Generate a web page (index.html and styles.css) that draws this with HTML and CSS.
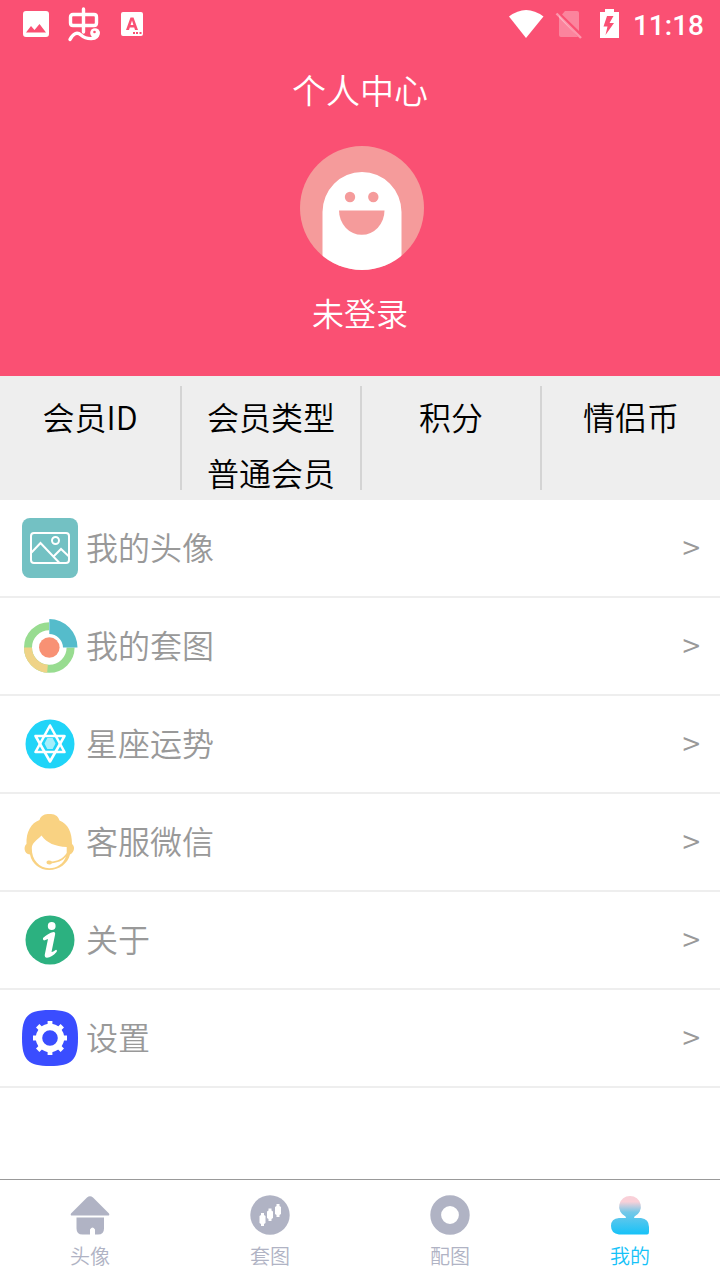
FILE: index.html
```
<!DOCTYPE html>
<html lang="zh-CN">
<head>
<meta charset="UTF-8">
<meta name="viewport" content="width=device-width, initial-scale=1.0">
<title>个人中心</title>
<link rel="stylesheet" href="styles.css">
</head>
<body>

<header class="header">
  <div class="status-bar">
    <svg class="status-left" width="150" height="48" viewBox="0 0 150 48">
      <path fill="#fff" fill-rule="evenodd" d="M26 11h20a3 3 0 0 1 3 3v20a3 3 0 0 1-3 3H26a3 3 0 0 1-3-3V14a3 3 0 0 1 3-3zM26 32.500h20l-6.500-8.500-5 6-3.500-4z"/>
      <g fill="none" stroke="#fff" stroke-width="3.400" stroke-linecap="round" stroke-linejoin="round">
        <path d="M83.500 9v23M73 14.500h21q2.500 0 2.500 2.500v6q0 2.500-2.500 2.500H73q-2.500 0-2.500-2.500v-6q0-2.500 2.500-2.500z"/>
        <path d="M70 39.500c3-6 7-8 11-4.500 5 4.500 17 6 17-2.500"/>
      </g>
      <circle cx="95" cy="33" r="4.800" fill="#fff"/>
      <circle cx="94.500" cy="32" r="1.300" fill="#fa5073"/>
      <path fill="#fff" fill-rule="evenodd" d="M123 12h18a2 2 0 0 1 2 2v20a2 2 0 0 1-2 2h-18a2 2 0 0 1-2-2V14a2 2 0 0 1 2-2zM130.500 17.500L126 30h3l.8-2.500h4.400L135 30h3l-4.500-12.500zM132 20.500l1.400 4.500h-2.800zM133 32v2h2v-2zM136 32v2h2v-2zM139.500 32v2h2v-2z"/>
    </svg>
    <div class="status-right">
      <svg width="114" height="48" viewBox="507 0 114 48">
        <path fill="#fff" d="M509 16.500q17-13 34.500 0L526 38z"/>
        <path fill="#fff" fill-opacity=".3" d="M565 11h12q2 0 2 2v18L562 14.500zM559 15.500l19 21.500h-17q-2 0-2-2z"/>
        <path stroke="#fff" stroke-opacity=".4" stroke-width="2.400" d="M556.500 13.500l24.500 24.500"/>
        <path fill="#fff" fill-rule="evenodd" d="M605 9h9v3h5v26h-19V12h5zM607 16l-3.500 10.500h4l-2 8.500 8.500-12h-4.500l4-7z"/>
      </svg>
      <span class="clock">11:18</span>
    </div>
  </div>
  <h1 class="title">个人中心</h1>
  <svg class="avatar" width="124" height="124" viewBox="0 0 124 124">
    <defs>
      <clipPath id="face"><circle cx="62" cy="62" r="62"/></clipPath>
    </defs>
    <circle cx="62" cy="62" r="62" fill="#f59b9b"/>
    <path clip-path="url(#face)" fill="#fff" d="M22.500 124V66a39.500 40 0 0 1 79 0v58z"/>
    <g fill="#f59b9b">
      <circle cx="50" cy="51" r="5.200"/>
      <circle cx="73.300" cy="51" r="5.200"/>
      <path d="M39 64.500h45.500a22.700 24.300 0 0 1-45.500 0z"/>
    </g>
  </svg>
  <p class="nickname">未登录</p>
</header>

<section class="stats">
  <div class="stat"><span>会员ID</span></div>
  <div class="stat"><span>会员类型</span><span>普通会员</span></div>
  <div class="stat"><span>积分</span></div>
  <div class="stat"><span>情侣币</span></div>
</section>

<main class="menu">
  <a class="menu-item" href="#">
    <svg class="menu-icon" viewBox="0 0 56 60">
      <rect width="56" height="60" rx="8" fill="#73c1c3"/>
      <g fill="none" stroke="#fff" stroke-width="2">
        <rect x="9" y="15" width="38" height="30" rx="3"/>
        <circle cx="33.500" cy="22.500" r="3.500"/>
        <path d="M9.500 34.500l9-9.500L37.500 45M32 38l7-7 8 7.500"/>
      </g>
    </svg>
    <span class="menu-text">我的头像</span>
    <span class="arrow">&gt;</span>
  </a>
  <a class="menu-item" href="#">
    <svg class="menu-icon" viewBox="0 0 56 60">
      <g transform="translate(0 1.500)">
        <g fill="none" stroke-width="8">
          <circle cx="27.300" cy="30" r="21.300" stroke="#98dc90"/>
          <path stroke="#efd387" d="M6 30a21.300 21.300 0 0 0 19.500 21.300"/>
        </g>
        <path fill="#fff" d="M27 0h29v30H27z"/>
        <path fill="#55bccb" d="M27.300 1.500A28.500 28.500 0 0 1 55.500 30H41a14 14 0 0 0-13.700-13.500z"/>
        <circle cx="27.300" cy="30" r="10.300" fill="#f89174"/>
      </g>
    </svg>
    <span class="menu-text">我的套图</span>
    <span class="arrow">&gt;</span>
  </a>
  <a class="menu-item" href="#">
    <svg class="menu-icon" viewBox="0 0 56 60">
      <circle cx="28" cy="30" r="24.500" fill="#20d4f8"/>
      <g fill="none" stroke="#fff" stroke-width="2.600" stroke-linejoin="round">
        <path d="M28 11.500L42.500 38h-29z"/>
        <path d="M28 47.500L13.500 22h29z"/>
      </g>
      <path fill="#a5effc" d="M25.300 24h5.400l2.800 5.500-2.800 5.500h-5.400l-2.800-5.500z"/>
    </svg>
    <span class="menu-text">星座运势</span>
    <span class="arrow">&gt;</span>
  </a>
  <a class="menu-item" href="#">
    <svg class="menu-icon" viewBox="0 0 56 60">
      <path fill="#f9d282" d="M17.500 8C19 3 23 2 27.300 2S36 3 37.500 8.500C46 12 50 20 50 32c3 2 3 8-2 10.500-2 9-11 15.500-20.700 15.500S10 52 8 42.500C1.500 42 1.500 34 4.500 32 4 20 9 11 17.500 8z"/>
      <path fill="#fff" d="M19.500 23.500C14 29 10 31 9.800 36c-.3 12 7.700 20.200 17.500 20.200 7.500 0 14.200-4.400 16.700-11.700-3.500 4.500-9 6.300-14 6.700-1.500 2-5.500 1.500-5.500-.7s3.500-2.500 5.500-1c5-.5 11-2.500 14.700-8.500V35C33 34.500 25 31 19.500 23.500z"/>
    </svg>
    <span class="menu-text">客服微信</span>
    <span class="arrow">&gt;</span>
  </a>
  <a class="menu-item" href="#">
    <svg class="menu-icon" viewBox="0 0 56 60">
      <circle cx="28" cy="30" r="24.500" fill="#2cb180"/>
      <circle cx="29.700" cy="16" r="3.900" fill="#fff"/>
      <path fill="#fff" d="M21 28c3-2.500 7-5.500 10.500-6 1.500 0 2 1 1.500 3l-3.500 17c1.500 0 3-1.500 4.500-2.300 1 0 1.200 1.300.5 2.300-2.500 3-6.500 5.500-9.500 5.800-2 0-2.500-1.500-2.200-3.300L26 29l-4 1.500q-1.500-1-1-2.500z"/>
    </svg>
    <span class="menu-text">关于</span>
    <span class="arrow">&gt;</span>
  </a>
  <a class="menu-item" href="#">
    <svg class="menu-icon" viewBox="0 0 56 60">
      <path fill="#3a4dff" d="M28 2c22 0 28 6 28 28s-6 28-28 28S0 52 0 30 6 2 28 2z"/>
      <g stroke="#fff" fill="none">
        <circle cx="28" cy="30" r="11" stroke-width="6.400"/>
        <path stroke-width="4.800" d="M28 13v5M28 42v5M11 30h5M40 30h5M15.700 17.700l4 4M36.300 38.300l4 4M15.700 42.300l4-4M36.300 21.700l4-4"/>
      </g>
    </svg>
    <span class="menu-text">设置</span>
    <span class="arrow">&gt;</span>
  </a>
</main>

<nav class="tab-bar">
  <a class="tab" href="#">
    <svg width="40" height="40" viewBox="0 0 40 40">
      <path fill="#b0b3c4" d="M17 2.500q3-2.500 6 0l16 16q1 2-1 2H2q-2 0-1-2zM6.500 22.500h27.500v11q0 6-6 6h-3v-5q-2.500-4-5 0v5h-7.500q-6 0-6-6z"/>
    </svg>
    <span>头像</span>
  </a>
  <a class="tab" href="#">
    <svg width="40" height="40" viewBox="0 0 40 40">
      <circle cx="20" cy="20" r="19.700" fill="#b0b3c4"/>
      <path fill="#fff" d="M11 18h3v2l1.500 1v7L14 29v2h-3v-2l-1.500-1v-7L11 20zM18.500 13.500h3v2l1.500 1v6.500l-1.500 1v2h-3v-2l-1.500-1v-6.500l1.500-1zM26.500 9h3v2l1.500 1v7l-1.500 1v2h-3v-2L25 19v-7l1.500-1z"/>
    </svg>
    <span>套图</span>
  </a>
  <a class="tab" href="#">
    <svg width="40" height="40" viewBox="0 0 40 40">
      <circle cx="20" cy="20" r="14.300" fill="none" stroke="#b0b3c4" stroke-width="10.800"/>
    </svg>
    <span>配图</span>
  </a>
  <a class="tab active" href="#">
    <svg width="40" height="40" viewBox="0 0 40 40">
      <defs>
        <linearGradient id="user" x1="0" y1="0" x2="0" y2="1">
          <stop offset="0.150" stop-color="#f9d0d8"/>
          <stop offset="0.420" stop-color="#74c8e8"/>
          <stop offset="1" stop-color="#16c2f8"/>
        </linearGradient>
      </defs>
      <path fill="url(#user)" d="M20 1a10.700 10.700 0 0 1 4.500 20.500l-.5 1.500h7q8 1 8 9v5q0 2.500-2 2.500H9Q1 38.500 1 31t8-8h7l-.5-1.500A10.700 10.700 0 0 1 20 1z"/>
    </svg>
    <span>我的</span>
  </a>
</nav>

</body>
</html>
```
FILE: styles.css
```
* {
  box-sizing: border-box;
}

body {
  margin: 0;
  min-height: 100vh;
  display: flex;
  flex-direction: column;
  background: #fff;
  font-family: "Noto Sans CJK SC", sans-serif;
  font-size: 32px;
  font-weight: 350;
}

a {
  color: inherit;
  text-decoration: none;
}

/* 顶部 */
.header {
  display: flex;
  flex-direction: column;
  align-items: center;
  padding-bottom: 42px;
  background: #fa5073;
  color: #fff;
}

.status-bar {
  display: flex;
  justify-content: space-between;
  width: 100%;
  height: 48px;
}

.status-right {
  display: flex;
  padding-right: 16px;
}

.clock {
  margin-left: 12px;
  font: 500 28px/52px Roboto, sans-serif;
}

.title {
  margin: 20px 0 34px;
  font-size: 34px;
  font-weight: 350;
  line-height: 44px;
}

.avatar {
  display: block;
  margin-left: 3px;
}

.nickname {
  margin: 20px 0 0;
  line-height: 44px;
}

/* 会员信息 */
.stats {
  display: grid;
  grid-template-columns: repeat(4, 1fr);
  padding: 10px 0;
  background: #eee;
  color: #000;
}

.stat {
  display: flex;
  flex-direction: column;
  align-items: center;
  gap: 20px;
  padding-top: 12px;
  border-left: 2px solid #d4d4d4;
  line-height: 36px;
}

.stat:first-child {
  border-left: none;
}

/* 菜单 */
.menu {
  flex: 1;
}

.menu-item {
  display: flex;
  align-items: center;
  height: 98px;
  padding: 0 20px 0 22px;
  border-bottom: 2px solid #eee;
  color: #999;
}

.menu-icon {
  width: 56px;
  height: 60px;
}

.menu-text {
  flex: 1;
  margin-left: 8px;
}

.menu-text,
.arrow {
  padding-bottom: 4px;
}

/* 底部导航 */
.tab-bar {
  display: flex;
  height: 101px;
  border-top: 1px solid #999;
}

.tab {
  flex: 1;
  display: flex;
  flex-direction: column;
  align-items: center;
  padding-top: 15px;
  color: #b0b3c4;
  font-size: 20px;
  line-height: 42px;
}

.tab.active {
  color: #16c2f8;
}
```
